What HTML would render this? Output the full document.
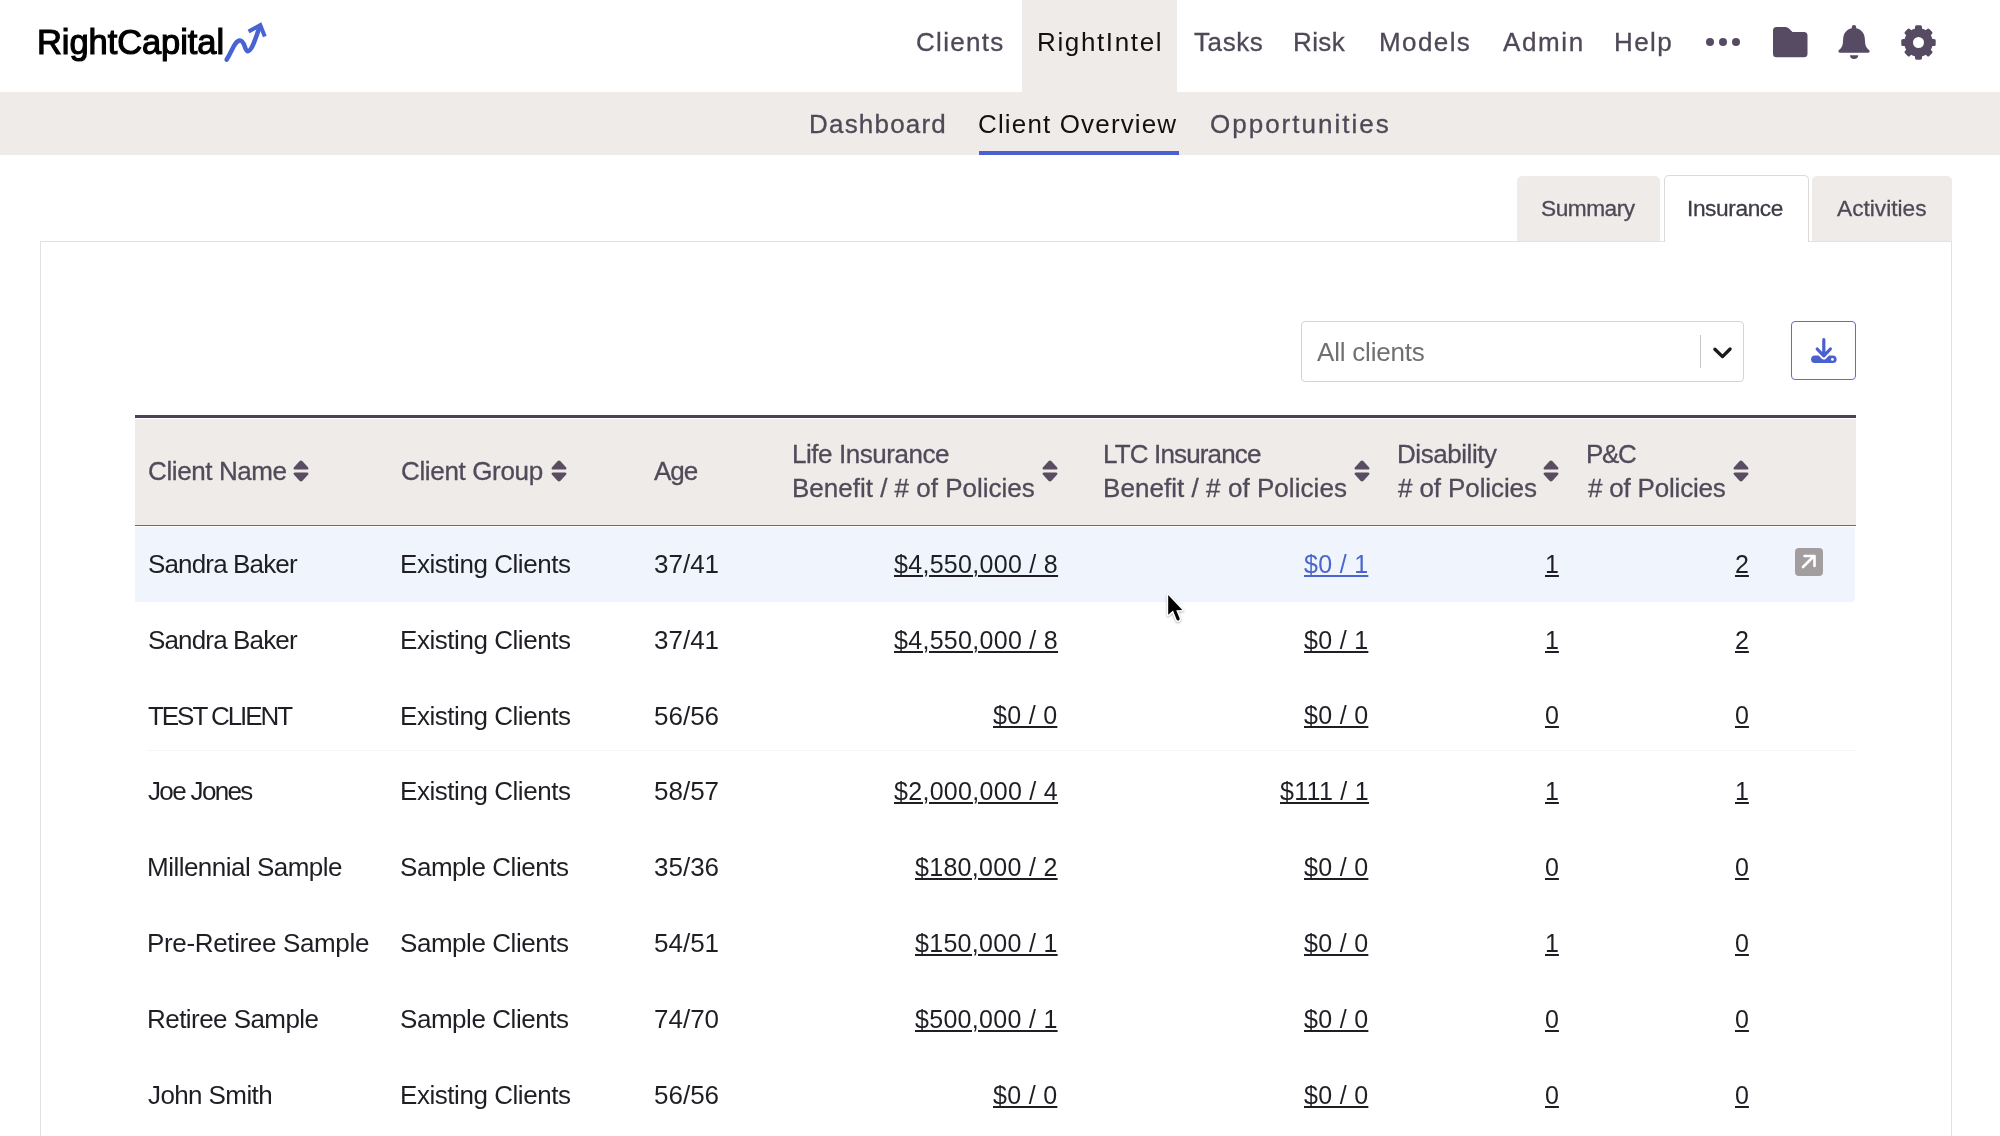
<!DOCTYPE html>
<html><head><meta charset="utf-8"><title>RightIntel - Client Overview</title>
<style>
html,body{margin:0;padding:0;background:#fff;width:2000px;height:1136px;overflow:hidden;position:relative}
.t{position:absolute;font-family:"Liberation Sans", sans-serif;line-height:1;white-space:nowrap;will-change:transform}
</style></head><body>
<div style="position:absolute;left:1022px;top:0px;width:155px;height:92px;background:#efebe8"></div>
<div style="position:absolute;left:0px;top:92px;width:2000px;height:63px;background:#efebe8"></div>
<div class="t" style="left:37px;top:24.80px;font-size:34.5px;color:#000;letter-spacing:-0.08px;font-weight:400;-webkit-text-stroke:1.15px #000;">RightCapital</div>
<svg style="position:absolute;left:222px;top:18px" width="50" height="46" viewBox="0 0 50 46">
<path d="M4.6 41.6 C 9 35.5, 12.5 22.8, 17.8 22.6 C 23 22.4, 22.5 33.4, 26 33.2 C 30 33, 34 19, 38 8" fill="none" stroke="#4a63d3" stroke-width="4.5" stroke-linecap="round"/>
<path d="M26.6 13.6 L38.3 7.2 L42.8 18.6" fill="none" stroke="#4a63d3" stroke-width="4" stroke-linejoin="miter" stroke-miterlimit="6"/>
</svg>
<div class="t" style="left:916px;top:28.99px;font-size:26px;color:#4f4857;letter-spacing:1.3px;font-weight:400;-webkit-text-stroke:0.3px #4f4857;">Clients</div>
<div class="t" style="left:1037px;top:28.99px;font-size:26px;color:#111;letter-spacing:1.63px;font-weight:400;">RightIntel</div>
<div class="t" style="left:1193.5px;top:28.99px;font-size:26px;color:#4f4857;letter-spacing:0.6px;font-weight:400;-webkit-text-stroke:0.3px #4f4857;">Tasks</div>
<div class="t" style="left:1293px;top:28.99px;font-size:26px;color:#4f4857;letter-spacing:0.4px;font-weight:400;-webkit-text-stroke:0.3px #4f4857;">Risk</div>
<div class="t" style="left:1378.5px;top:28.99px;font-size:26px;color:#4f4857;letter-spacing:1.4px;font-weight:400;-webkit-text-stroke:0.3px #4f4857;">Models</div>
<div class="t" style="left:1503px;top:28.99px;font-size:26px;color:#4f4857;letter-spacing:1.6px;font-weight:400;-webkit-text-stroke:0.3px #4f4857;">Admin</div>
<div class="t" style="left:1613.5px;top:28.99px;font-size:26px;color:#4f4857;letter-spacing:1.4px;font-weight:400;-webkit-text-stroke:0.3px #4f4857;">Help</div>
<div style="position:absolute;left:1706.2px;top:37.5px;width:8px;height:8px;background:#574a63;border-radius:50%"></div>
<div style="position:absolute;left:1718.8px;top:37.5px;width:8px;height:8px;background:#574a63;border-radius:50%"></div>
<div style="position:absolute;left:1731.5px;top:37.5px;width:8px;height:8px;background:#574a63;border-radius:50%"></div>
<svg style="position:absolute;left:1772.6px;top:26.6px" width="35" height="31" viewBox="0 0 35 31">
<path d="M3.5 0 H12.5 Q14.5 0 16 1.5 L19.5 5 H31 Q34.5 5 34.5 8.5 V26.8 Q34.5 30.3 31 30.3 H3.5 Q0 30.3 0 26.8 V3.5 Q0 0 3.5 0 Z" fill="#574a63"/></svg>
<svg style="position:absolute;left:1838px;top:24px" width="32" height="36" viewBox="0 0 32 36">
<path d="M16 1 Q18.2 1 18.2 3 V4.2 C23.5 5.2 26.6 9.5 26.8 14.5 L27.2 19.5 C27.5 22.5 29 24.5 31 26 Q32 27 31.5 28 Q31 28.7 30 28.7 H2 Q1 28.7 0.5 28 Q0 27 1 26 C3 24.5 4.5 22.5 4.8 19.5 L5.2 14.5 C5.4 9.5 8.5 5.2 13.8 4.2 V3 Q13.8 1 16 1 Z" fill="#574a63"/>
<path d="M12 31.2 H20.2 Q20 35 16 35 Q12.2 35 12 31.2 Z" fill="#574a63"/></svg>
<svg style="position:absolute;left:1900.8px;top:24.8px" width="35" height="35" viewBox="0 0 35 35">
<rect x="14" y="0.3" width="7" height="9" rx="1.6" transform="rotate(0 17.5 17.5)" fill="#574a63"/><rect x="14" y="0.3" width="7" height="9" rx="1.6" transform="rotate(45 17.5 17.5)" fill="#574a63"/><rect x="14" y="0.3" width="7" height="9" rx="1.6" transform="rotate(90 17.5 17.5)" fill="#574a63"/><rect x="14" y="0.3" width="7" height="9" rx="1.6" transform="rotate(135 17.5 17.5)" fill="#574a63"/><rect x="14" y="0.3" width="7" height="9" rx="1.6" transform="rotate(180 17.5 17.5)" fill="#574a63"/><rect x="14" y="0.3" width="7" height="9" rx="1.6" transform="rotate(225 17.5 17.5)" fill="#574a63"/><rect x="14" y="0.3" width="7" height="9" rx="1.6" transform="rotate(270 17.5 17.5)" fill="#574a63"/><rect x="14" y="0.3" width="7" height="9" rx="1.6" transform="rotate(315 17.5 17.5)" fill="#574a63"/><circle cx="17.5" cy="17.5" r="14.3" fill="#574a63"/>
<circle cx="17.5" cy="17.5" r="5.5" fill="#fff"/></svg>
<div class="t" style="left:809px;top:110.99px;font-size:26px;color:#4f4857;letter-spacing:1.2px;font-weight:400;-webkit-text-stroke:0.3px #4f4857;">Dashboard</div>
<div class="t" style="left:978px;top:110.99px;font-size:26px;color:#111;letter-spacing:1.15px;font-weight:400;">Client Overview</div>
<div class="t" style="left:1210px;top:110.99px;font-size:26px;color:#4f4857;letter-spacing:2.0px;font-weight:400;-webkit-text-stroke:0.3px #4f4857;">Opportunities</div>
<div style="position:absolute;left:979px;top:151px;width:200px;height:4px;background:#4a5fd0"></div>
<div style="position:absolute;left:39.5px;top:240.5px;width:1912.5px;height:900px;border:1.5px solid #e4e1de;background:#fff;box-sizing:border-box"></div>
<div style="position:absolute;left:1517px;top:176px;width:143px;height:64.5px;background:#efebe8;border-radius:5px 5px 0 0"></div>
<div style="position:absolute;left:1664px;top:175px;width:145px;height:67px;background:#fff;border:1.2px solid #dcdad9;border-bottom:none;border-radius:5px 5px 0 0;box-sizing:border-box"></div>
<div style="position:absolute;left:1812px;top:176px;width:140px;height:64.5px;background:#efebe8;border-radius:5px 5px 0 0"></div>
<div class="t" style="left:1541px;top:197.48px;font-size:22.7px;color:#4f4857;letter-spacing:-0.5px;font-weight:400;-webkit-text-stroke:0.3px #4f4857;">Summary</div>
<div class="t" style="left:1687px;top:197.48px;font-size:22.7px;color:#3f3a45;letter-spacing:-0.4px;font-weight:400;-webkit-text-stroke:0.3px #3f3a45;">Insurance</div>
<div class="t" style="left:1837px;top:197.48px;font-size:22.7px;color:#4f4857;letter-spacing:0px;font-weight:400;-webkit-text-stroke:0.3px #4f4857;">Activities</div>
<div style="position:absolute;left:1301px;top:321px;width:443px;height:61px;border:1.5px solid #d4d4d4;border-radius:4px;box-sizing:border-box;background:#fff"></div>
<div class="t" style="left:1317px;top:338.99px;font-size:26px;color:#707070;letter-spacing:-0.2px;font-weight:400;">All clients</div>
<div style="position:absolute;left:1700px;top:335px;width:1.2px;height:33px;background:#c6c6c6"></div>
<svg style="position:absolute;left:1712px;top:346px" width="21" height="14" viewBox="0 0 21 14">
<path d="M2.9 3.2 L10.5 10.6 L18.1 3.0" fill="none" stroke="#1a1a1a" stroke-width="3.3" stroke-linecap="round" stroke-linejoin="round"/></svg>
<div style="position:absolute;left:1791px;top:321px;width:65px;height:59px;border:1.5px solid #5570d8;border-radius:4px;box-sizing:border-box;background:#fff"></div>
<svg style="position:absolute;left:1810px;top:336px" width="28" height="28" viewBox="0 0 28 28">
<rect x="1.1" y="19.4" width="25.5" height="7.7" rx="3.85" fill="#4a5fd0"/>
<path d="M7 12.7 L13.8 19.9 L20.6 12.7" fill="none" stroke="#fff" stroke-width="7" stroke-linecap="round" stroke-linejoin="round"/>
<path d="M13.8 3.7 V19.5 M7.2 13 L13.8 19.9 L20.4 13" fill="none" stroke="#4a5fd0" stroke-width="3.2" stroke-linecap="round" stroke-linejoin="round"/>
<circle cx="22.4" cy="23.4" r="1.4" fill="#fff"/></svg>
<div style="position:absolute;left:135px;top:415px;width:1721px;height:3px;background:#4a4353"></div>
<div style="position:absolute;left:135px;top:418.5px;width:1721px;height:106.5px;background:#efebe8"></div>
<div style="position:absolute;left:135px;top:525px;width:1721px;height:1px;background:#6e687a"></div>
<div style="position:absolute;left:135px;top:527px;width:1720px;height:74.5px;background:#eff4fd;border-radius:0 0 4px 0"></div>
<div class="t" style="left:147.5px;top:457.99px;font-size:26px;color:#514a5a;letter-spacing:-0.4px;font-weight:400;-webkit-text-stroke:0.3px #514a5a;">Client Name</div>
<div class="t" style="left:400.5px;top:457.99px;font-size:26px;color:#514a5a;letter-spacing:-0.35px;font-weight:400;-webkit-text-stroke:0.3px #514a5a;">Client Group</div>
<div class="t" style="left:654px;top:457.99px;font-size:26px;color:#514a5a;letter-spacing:-1px;font-weight:400;-webkit-text-stroke:0.3px #514a5a;">Age</div>
<div class="t" style="left:792px;top:440.59px;font-size:26px;color:#514a5a;letter-spacing:-0.45px;font-weight:400;-webkit-text-stroke:0.3px #514a5a;">Life Insurance</div>
<div class="t" style="left:792px;top:475.39px;font-size:26px;color:#514a5a;letter-spacing:0px;font-weight:400;-webkit-text-stroke:0.3px #514a5a;">Benefit / # of Policies</div>
<div class="t" style="left:1103px;top:440.59px;font-size:26px;color:#514a5a;letter-spacing:-0.85px;font-weight:400;-webkit-text-stroke:0.3px #514a5a;">LTC Insurance</div>
<div class="t" style="left:1103px;top:475.39px;font-size:26px;color:#514a5a;letter-spacing:0.05px;font-weight:400;-webkit-text-stroke:0.3px #514a5a;">Benefit / # of Policies</div>
<div class="t" style="left:1396.5px;top:440.59px;font-size:26px;color:#514a5a;letter-spacing:-0.45px;font-weight:400;-webkit-text-stroke:0.3px #514a5a;">Disability</div>
<div class="t" style="left:1398px;top:475.39px;font-size:26px;color:#514a5a;letter-spacing:-0.1px;font-weight:400;-webkit-text-stroke:0.3px #514a5a;"># of Policies</div>
<div class="t" style="left:1586px;top:440.59px;font-size:26px;color:#514a5a;letter-spacing:-1.3px;font-weight:400;-webkit-text-stroke:0.3px #514a5a;">P&amp;C</div>
<div class="t" style="left:1588px;top:475.39px;font-size:26px;color:#514a5a;letter-spacing:-0.2px;font-weight:400;-webkit-text-stroke:0.3px #514a5a;"># of Policies</div>
<svg style="position:absolute;left:293px;top:459.6px" width="16" height="22" viewBox="0 0 16 22">
<path d="M8 0.5 Q8.8 0.5 9.5 1.3 L15.2 7.5 Q16 9.5 14 9.5 H2 Q0 9.5 0.8 7.5 L6.5 1.3 Q7.2 0.5 8 0.5 Z" fill="#594d61"/>
<path d="M8 21.5 Q8.8 21.5 9.5 20.7 L15.2 14.5 Q16 12.5 14 12.5 H2 Q0 12.5 0.8 14.5 L6.5 20.7 Q7.2 21.5 8 21.5 Z" fill="#594d61"/></svg>
<svg style="position:absolute;left:550.5px;top:459.6px" width="16" height="22" viewBox="0 0 16 22">
<path d="M8 0.5 Q8.8 0.5 9.5 1.3 L15.2 7.5 Q16 9.5 14 9.5 H2 Q0 9.5 0.8 7.5 L6.5 1.3 Q7.2 0.5 8 0.5 Z" fill="#594d61"/>
<path d="M8 21.5 Q8.8 21.5 9.5 20.7 L15.2 14.5 Q16 12.5 14 12.5 H2 Q0 12.5 0.8 14.5 L6.5 20.7 Q7.2 21.5 8 21.5 Z" fill="#594d61"/></svg>
<svg style="position:absolute;left:1042px;top:459.6px" width="16" height="22" viewBox="0 0 16 22">
<path d="M8 0.5 Q8.8 0.5 9.5 1.3 L15.2 7.5 Q16 9.5 14 9.5 H2 Q0 9.5 0.8 7.5 L6.5 1.3 Q7.2 0.5 8 0.5 Z" fill="#594d61"/>
<path d="M8 21.5 Q8.8 21.5 9.5 20.7 L15.2 14.5 Q16 12.5 14 12.5 H2 Q0 12.5 0.8 14.5 L6.5 20.7 Q7.2 21.5 8 21.5 Z" fill="#594d61"/></svg>
<svg style="position:absolute;left:1354px;top:459.6px" width="16" height="22" viewBox="0 0 16 22">
<path d="M8 0.5 Q8.8 0.5 9.5 1.3 L15.2 7.5 Q16 9.5 14 9.5 H2 Q0 9.5 0.8 7.5 L6.5 1.3 Q7.2 0.5 8 0.5 Z" fill="#594d61"/>
<path d="M8 21.5 Q8.8 21.5 9.5 20.7 L15.2 14.5 Q16 12.5 14 12.5 H2 Q0 12.5 0.8 14.5 L6.5 20.7 Q7.2 21.5 8 21.5 Z" fill="#594d61"/></svg>
<svg style="position:absolute;left:1543px;top:459.6px" width="16" height="22" viewBox="0 0 16 22">
<path d="M8 0.5 Q8.8 0.5 9.5 1.3 L15.2 7.5 Q16 9.5 14 9.5 H2 Q0 9.5 0.8 7.5 L6.5 1.3 Q7.2 0.5 8 0.5 Z" fill="#594d61"/>
<path d="M8 21.5 Q8.8 21.5 9.5 20.7 L15.2 14.5 Q16 12.5 14 12.5 H2 Q0 12.5 0.8 14.5 L6.5 20.7 Q7.2 21.5 8 21.5 Z" fill="#594d61"/></svg>
<svg style="position:absolute;left:1733px;top:459.6px" width="16" height="22" viewBox="0 0 16 22">
<path d="M8 0.5 Q8.8 0.5 9.5 1.3 L15.2 7.5 Q16 9.5 14 9.5 H2 Q0 9.5 0.8 7.5 L6.5 1.3 Q7.2 0.5 8 0.5 Z" fill="#594d61"/>
<path d="M8 21.5 Q8.8 21.5 9.5 20.7 L15.2 14.5 Q16 12.5 14 12.5 H2 Q0 12.5 0.8 14.5 L6.5 20.7 Q7.2 21.5 8 21.5 Z" fill="#594d61"/></svg>
<div class="t" style="left:148px;top:550.89px;font-size:26px;color:#1f1e24;letter-spacing:-0.85px;font-weight:400;">Sandra Baker</div>
<div class="t" style="left:400.2px;top:550.89px;font-size:26px;color:#1f1e24;letter-spacing:-0.45px;font-weight:400;">Existing Clients</div>
<div class="t" style="left:654px;top:550.89px;font-size:26px;color:#1f1e24;letter-spacing:0px;font-weight:400;">37/41</div>
<div class="t" style="right:942px;top:551.74px;font-size:25px;color:#1f1e24;letter-spacing:0.3px;font-weight:400;text-decoration:underline;text-decoration-thickness:2px;text-underline-offset:2px;">$4,550,000 / 8</div>
<div class="t" style="right:632px;top:551.74px;font-size:25px;color:#4a66cc;letter-spacing:0.3px;font-weight:400;text-decoration:underline;text-decoration-thickness:2px;text-underline-offset:2px;">$0 / 1</div>
<div class="t" style="right:441px;top:551.74px;font-size:25px;color:#1f1e24;letter-spacing:0px;font-weight:400;text-decoration:underline;text-decoration-thickness:2px;text-underline-offset:2px;">1</div>
<div class="t" style="right:251px;top:551.74px;font-size:25px;color:#1f1e24;letter-spacing:0px;font-weight:400;text-decoration:underline;text-decoration-thickness:2px;text-underline-offset:2px;">2</div>
<div class="t" style="left:148px;top:626.72px;font-size:26px;color:#1f1e24;letter-spacing:-0.85px;font-weight:400;">Sandra Baker</div>
<div class="t" style="left:400.2px;top:626.72px;font-size:26px;color:#1f1e24;letter-spacing:-0.45px;font-weight:400;">Existing Clients</div>
<div class="t" style="left:654px;top:626.72px;font-size:26px;color:#1f1e24;letter-spacing:0px;font-weight:400;">37/41</div>
<div class="t" style="right:942px;top:627.57px;font-size:25px;color:#1f1e24;letter-spacing:0.3px;font-weight:400;text-decoration:underline;text-decoration-thickness:2px;text-underline-offset:2px;">$4,550,000 / 8</div>
<div class="t" style="right:632px;top:627.57px;font-size:25px;color:#1f1e24;letter-spacing:0.3px;font-weight:400;text-decoration:underline;text-decoration-thickness:2px;text-underline-offset:2px;">$0 / 1</div>
<div class="t" style="right:441px;top:627.57px;font-size:25px;color:#1f1e24;letter-spacing:0px;font-weight:400;text-decoration:underline;text-decoration-thickness:2px;text-underline-offset:2px;">1</div>
<div class="t" style="right:251px;top:627.57px;font-size:25px;color:#1f1e24;letter-spacing:0px;font-weight:400;text-decoration:underline;text-decoration-thickness:2px;text-underline-offset:2px;">2</div>
<div class="t" style="left:148px;top:702.55px;font-size:26px;color:#1f1e24;letter-spacing:-2.05px;font-weight:400;">TEST CLIENT</div>
<div class="t" style="left:400.2px;top:702.55px;font-size:26px;color:#1f1e24;letter-spacing:-0.45px;font-weight:400;">Existing Clients</div>
<div class="t" style="left:654px;top:702.55px;font-size:26px;color:#1f1e24;letter-spacing:0px;font-weight:400;">56/56</div>
<div class="t" style="right:943px;top:703.40px;font-size:25px;color:#1f1e24;letter-spacing:0.3px;font-weight:400;text-decoration:underline;text-decoration-thickness:2px;text-underline-offset:2px;">$0 / 0</div>
<div class="t" style="right:632px;top:703.40px;font-size:25px;color:#1f1e24;letter-spacing:0.3px;font-weight:400;text-decoration:underline;text-decoration-thickness:2px;text-underline-offset:2px;">$0 / 0</div>
<div class="t" style="right:441px;top:703.40px;font-size:25px;color:#1f1e24;letter-spacing:0px;font-weight:400;text-decoration:underline;text-decoration-thickness:2px;text-underline-offset:2px;">0</div>
<div class="t" style="right:251px;top:703.40px;font-size:25px;color:#1f1e24;letter-spacing:0px;font-weight:400;text-decoration:underline;text-decoration-thickness:2px;text-underline-offset:2px;">0</div>
<div class="t" style="left:148px;top:778.38px;font-size:26px;color:#1f1e24;letter-spacing:-1.65px;font-weight:400;">Joe Jones</div>
<div class="t" style="left:400.2px;top:778.38px;font-size:26px;color:#1f1e24;letter-spacing:-0.45px;font-weight:400;">Existing Clients</div>
<div class="t" style="left:654px;top:778.38px;font-size:26px;color:#1f1e24;letter-spacing:0px;font-weight:400;">58/57</div>
<div class="t" style="right:942px;top:779.23px;font-size:25px;color:#1f1e24;letter-spacing:0.3px;font-weight:400;text-decoration:underline;text-decoration-thickness:2px;text-underline-offset:2px;">$2,000,000 / 4</div>
<div class="t" style="right:631px;top:779.23px;font-size:25px;color:#1f1e24;letter-spacing:0.3px;font-weight:400;text-decoration:underline;text-decoration-thickness:2px;text-underline-offset:2px;">$111 / 1</div>
<div class="t" style="right:441px;top:779.23px;font-size:25px;color:#1f1e24;letter-spacing:0px;font-weight:400;text-decoration:underline;text-decoration-thickness:2px;text-underline-offset:2px;">1</div>
<div class="t" style="right:251px;top:779.23px;font-size:25px;color:#1f1e24;letter-spacing:0px;font-weight:400;text-decoration:underline;text-decoration-thickness:2px;text-underline-offset:2px;">1</div>
<div class="t" style="left:147px;top:854.21px;font-size:26px;color:#1f1e24;letter-spacing:-0.52px;font-weight:400;">Millennial Sample</div>
<div class="t" style="left:400.2px;top:854.21px;font-size:26px;color:#1f1e24;letter-spacing:-0.45px;font-weight:400;">Sample Clients</div>
<div class="t" style="left:654px;top:854.21px;font-size:26px;color:#1f1e24;letter-spacing:0px;font-weight:400;">35/36</div>
<div class="t" style="right:942px;top:855.06px;font-size:25px;color:#1f1e24;letter-spacing:0.3px;font-weight:400;text-decoration:underline;text-decoration-thickness:2px;text-underline-offset:2px;">$180,000 / 2</div>
<div class="t" style="right:632px;top:855.06px;font-size:25px;color:#1f1e24;letter-spacing:0.3px;font-weight:400;text-decoration:underline;text-decoration-thickness:2px;text-underline-offset:2px;">$0 / 0</div>
<div class="t" style="right:441px;top:855.06px;font-size:25px;color:#1f1e24;letter-spacing:0px;font-weight:400;text-decoration:underline;text-decoration-thickness:2px;text-underline-offset:2px;">0</div>
<div class="t" style="right:251px;top:855.06px;font-size:25px;color:#1f1e24;letter-spacing:0px;font-weight:400;text-decoration:underline;text-decoration-thickness:2px;text-underline-offset:2px;">0</div>
<div class="t" style="left:146.5px;top:930.04px;font-size:26px;color:#1f1e24;letter-spacing:-0.35px;font-weight:400;">Pre-Retiree Sample</div>
<div class="t" style="left:400.2px;top:930.04px;font-size:26px;color:#1f1e24;letter-spacing:-0.45px;font-weight:400;">Sample Clients</div>
<div class="t" style="left:654px;top:930.04px;font-size:26px;color:#1f1e24;letter-spacing:0px;font-weight:400;">54/51</div>
<div class="t" style="right:942px;top:930.89px;font-size:25px;color:#1f1e24;letter-spacing:0.3px;font-weight:400;text-decoration:underline;text-decoration-thickness:2px;text-underline-offset:2px;">$150,000 / 1</div>
<div class="t" style="right:632px;top:930.89px;font-size:25px;color:#1f1e24;letter-spacing:0.3px;font-weight:400;text-decoration:underline;text-decoration-thickness:2px;text-underline-offset:2px;">$0 / 0</div>
<div class="t" style="right:441px;top:930.89px;font-size:25px;color:#1f1e24;letter-spacing:0px;font-weight:400;text-decoration:underline;text-decoration-thickness:2px;text-underline-offset:2px;">1</div>
<div class="t" style="right:251px;top:930.89px;font-size:25px;color:#1f1e24;letter-spacing:0px;font-weight:400;text-decoration:underline;text-decoration-thickness:2px;text-underline-offset:2px;">0</div>
<div class="t" style="left:146.5px;top:1005.87px;font-size:26px;color:#1f1e24;letter-spacing:-0.55px;font-weight:400;">Retiree Sample</div>
<div class="t" style="left:400.2px;top:1005.87px;font-size:26px;color:#1f1e24;letter-spacing:-0.45px;font-weight:400;">Sample Clients</div>
<div class="t" style="left:654px;top:1005.87px;font-size:26px;color:#1f1e24;letter-spacing:0px;font-weight:400;">74/70</div>
<div class="t" style="right:942px;top:1006.72px;font-size:25px;color:#1f1e24;letter-spacing:0.3px;font-weight:400;text-decoration:underline;text-decoration-thickness:2px;text-underline-offset:2px;">$500,000 / 1</div>
<div class="t" style="right:632px;top:1006.72px;font-size:25px;color:#1f1e24;letter-spacing:0.3px;font-weight:400;text-decoration:underline;text-decoration-thickness:2px;text-underline-offset:2px;">$0 / 0</div>
<div class="t" style="right:441px;top:1006.72px;font-size:25px;color:#1f1e24;letter-spacing:0px;font-weight:400;text-decoration:underline;text-decoration-thickness:2px;text-underline-offset:2px;">0</div>
<div class="t" style="right:251px;top:1006.72px;font-size:25px;color:#1f1e24;letter-spacing:0px;font-weight:400;text-decoration:underline;text-decoration-thickness:2px;text-underline-offset:2px;">0</div>
<div class="t" style="left:148px;top:1081.70px;font-size:26px;color:#1f1e24;letter-spacing:-0.6px;font-weight:400;">John Smith</div>
<div class="t" style="left:400.2px;top:1081.70px;font-size:26px;color:#1f1e24;letter-spacing:-0.45px;font-weight:400;">Existing Clients</div>
<div class="t" style="left:654px;top:1081.70px;font-size:26px;color:#1f1e24;letter-spacing:0px;font-weight:400;">56/56</div>
<div class="t" style="right:943px;top:1082.55px;font-size:25px;color:#1f1e24;letter-spacing:0.3px;font-weight:400;text-decoration:underline;text-decoration-thickness:2px;text-underline-offset:2px;">$0 / 0</div>
<div class="t" style="right:632px;top:1082.55px;font-size:25px;color:#1f1e24;letter-spacing:0.3px;font-weight:400;text-decoration:underline;text-decoration-thickness:2px;text-underline-offset:2px;">$0 / 0</div>
<div class="t" style="right:441px;top:1082.55px;font-size:25px;color:#1f1e24;letter-spacing:0px;font-weight:400;text-decoration:underline;text-decoration-thickness:2px;text-underline-offset:2px;">0</div>
<div class="t" style="right:251px;top:1082.55px;font-size:25px;color:#1f1e24;letter-spacing:0px;font-weight:400;text-decoration:underline;text-decoration-thickness:2px;text-underline-offset:2px;">0</div>
<div style="position:absolute;left:147px;top:750px;width:1709px;height:1px;background:#f7f4f3"></div>
<svg style="position:absolute;left:1795px;top:548px" width="28" height="28" viewBox="0 0 28 28">
<rect x="0" y="0" width="28" height="28" rx="4" fill="#a29e9f"/>
<path d="M8 19 L18.5 8.5 M9.5 8 H19.5 V18" fill="none" stroke="#fff" stroke-width="2.6" stroke-linecap="round" stroke-linejoin="round"/></svg>
<svg style="position:absolute;left:1160px;top:588px;filter:drop-shadow(0.5px 1.5px 1.2px rgba(0,0,0,0.3))" width="32" height="42" viewBox="0 0 32 42">
<path d="M8.2 7 L8.2 26.8 L13 22.6 L16.6 31.6 Q17.3 33 18.7 32.4 Q20.2 31.7 19.6 30.3 L16.2 22.2 L22.3 22 Z" fill="#000" stroke="#fff" stroke-width="2.8" stroke-linejoin="round" paint-order="stroke"/></svg>
</body></html>
